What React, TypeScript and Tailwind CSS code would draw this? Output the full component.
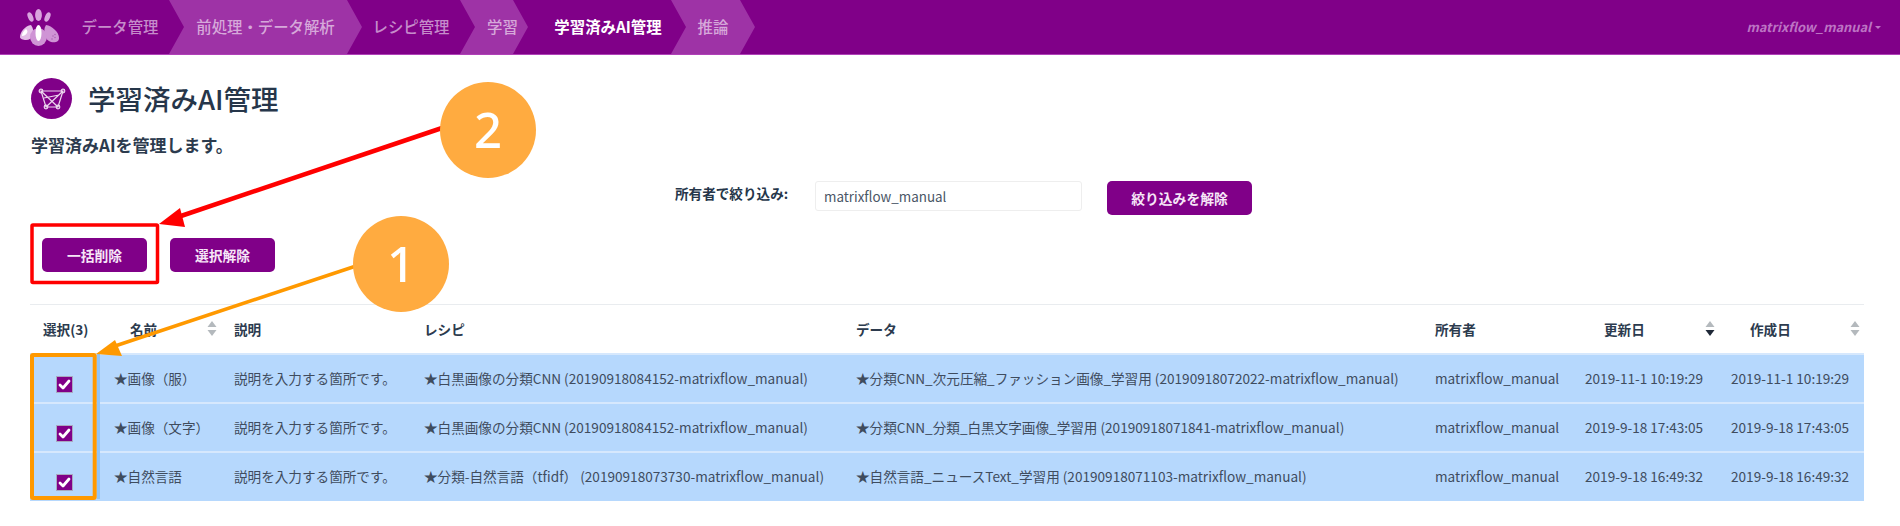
const font = { fontFamily: '"Noto Sans CJK JP", "Noto Sans", sans-serif' };

function Segment({ label, light, active, w, shift }: { label: string; light?: boolean; active?: boolean; w: number; shift?: boolean }) {
  return (
    <div
      className={`relative flex h-full shrink-0 items-center justify-center ${shift ? "pl-[17px]" : ""} ${light ? "bg-[#9e33a6] [clip-path:polygon(0_0,calc(100%-15px)_0,100%_50%,calc(100%-15px)_100%,0_100%,15px_50%)]" : ""}`}
      style={{ width: w }}
    >
      <span className={`text-[15.4px] leading-none whitespace-nowrap ${active ? "font-bold text-white" : light ? "font-medium text-[#d6a8da]" : "font-medium text-[#c68ccb]"}`}>
        {label}
      </span>
    </div>
  );
}

function Logo() {
  return (
    <svg width="40" height="37" viewBox="0 0 40 37" className="shrink-0">
      <ellipse cx="18.5" cy="6" rx="3.4" ry="6" fill="#d9a4de" />
      <ellipse cx="10.5" cy="8" rx="2.5" ry="5" fill="#d9a4de" transform="rotate(-24 10.5 8)" />
      <ellipse cx="27.5" cy="8" rx="2.5" ry="5" fill="#d9a4de" transform="rotate(24 27.5 8)" />
      <path d="M11 16C5 17 0 23 0 28c0 2 3 3 6 3 3 0 6-2 7-5 1-4 0-7-2-10Z" fill="#e3bce6" />
      <path d="M6 20C3 22 2 25 2 27c2 0 4-1 5-3 1-2 0-3-1-4Z" fill="#ffffff" />
      <path d="M26 16c6 1 13 7 13 13 0 4-4 5-8 4-3-1-5-3-6-7-1-4-1-7 1-10Z" fill="#cf94d5" />
      <circle cx="33" cy="27" r="0.7" fill="#a45cab" />
      <circle cx="35" cy="25.5" r="0.7" fill="#a45cab" />
      <circle cx="35" cy="28.5" r="0.7" fill="#a45cab" />
      <circle cx="32" cy="30" r="0.7" fill="#a45cab" />
      <ellipse cx="18.5" cy="28" rx="8.5" ry="9" fill="#cf94d5" />
      <ellipse cx="18.5" cy="24" rx="3" ry="8" fill="#ffffff" />
    </svg>
  );
}

function ModelIcon() {
  return (
    <div className="flex h-[41px] w-[41px] shrink-0 items-center justify-center rounded-full bg-[#800088]">
      <svg width="28" height="24" viewBox="0 0 28 24" fill="none" stroke="#ecd6ee" strokeWidth="1.2">
        <path d="M3 4 L25 4 L20 20 L8 20 Z" />
        <path d="M3 4 L20 20 M25 4 L8 20 M6 11 L21 8" />
        <circle cx="3" cy="4" r="1.8" />
        <circle cx="25" cy="4" r="1.8" />
        <circle cx="20" cy="20" r="1.8" />
        <circle cx="8" cy="20" r="1.8" />
      </svg>
    </div>
  );
}

function Sort({ down }: { down?: boolean }) {
  return (
    <svg width="10" height="15" viewBox="0 0 10 15" className="shrink-0">
      <path d="M5 0 L9.5 6 L0.5 6 Z" fill="#b4b9bd" />
      <path d="M5 15 L9.5 9 L0.5 9 Z" fill={down ? "#1f2937" : "#b4b9bd"} />
    </svg>
  );
}

function Button({ children, w }: { children: string; w: number }) {
  return (
    <button className="flex h-[34px] items-center justify-center rounded-[5px] bg-[#800088] text-[13.8px] font-bold text-[#f6e6f7]" style={{ width: w }}>
      {children}
    </button>
  );
}

const colWidths = [71, 120, 190, 432, 579, 150, 146, 146];
const rows = [
  ["★画像（服）", "説明を入力する箇所です。", "★白黒画像の分類CNN (20190918084152-matrixflow_manual)", "★分類CNN_次元圧縮_ファッション画像_学習用 (20190918072022-matrixflow_manual)", "matrixflow_manual", "2019-11-1 10:19:29", "2019-11-1 10:19:29"],
  ["★画像（文字）", "説明を入力する箇所です。", "★白黒画像の分類CNN (20190918084152-matrixflow_manual)", "★分類CNN_分類_白黒文字画像_学習用 (20190918071841-matrixflow_manual)", "matrixflow_manual", "2019-9-18 17:43:05", "2019-9-18 17:43:05"],
  ["★自然言語", "説明を入力する箇所です。", "★分類-自然言語（tfidf） (20190918073730-matrixflow_manual)", "★自然言語_ニュースText_学習用 (20190918071103-matrixflow_manual)", "matrixflow_manual", "2019-9-18 16:49:32", "2019-9-18 16:49:32"],
];

function Check() {
  return (
    <div className="mt-[12px] flex h-[17px] w-[17px] items-center justify-center border border-[#a9a9c0] bg-[#800088]">
      <svg width="13" height="11" viewBox="0 0 13 11" fill="none" stroke="#fff" strokeWidth="2.8" strokeLinecap="round" strokeLinejoin="round">
        <path d="M2 6 L5 9 L11 2" />
      </svg>
    </div>
  );
}

export default function App() {
  return (
    <div className="relative h-[526px] w-[1900px] overflow-hidden bg-white text-[13.6px] text-[#37465a]" style={font}>
      <header className="flex h-[55px] items-stretch border-b border-[#b040b8] bg-[#800088]">
        <div className="flex w-[71px] shrink-0 items-center pl-[20px]"><Logo /></div>
        <Segment label="データ管理" w={98} />
        <Segment label="前処理・データ解析" light w={193} />
        <Segment label="レシピ管理" w={98} />
        <Segment label="学習" light w={68} shift />
        <Segment label="学習済みAI管理" active w={143} shift />
        <Segment label="推論" light w={84} />
        <div className="ml-auto flex items-center gap-[4px] pr-[19px] text-[12.8px] font-bold italic text-[#bd74c4]">
          matrixflow_manual
          <span className="h-0 w-0 border-x-[3px] border-t-[3px] border-x-transparent border-t-[#bd74c4]" />
        </div>
      </header>

      <main className="px-[30px] pt-[23px]">
        <div className="flex items-center gap-[16px] pl-[1px]">
          <ModelIcon />
          <h1 className="text-[27.5px] leading-[41px] font-medium text-[#26364a]">学習済みAI管理</h1>
        </div>
        <p className="mt-[15px] pl-[1px] text-[17px] leading-[22px] font-bold text-[#2c3b4e]">学習済みAIを管理します。</p>

        <div className="mt-[25px] flex items-start pl-[645px]">
          <span className="mt-[3px] w-[140px] text-[13.6px] leading-[18px] font-bold text-[#26364a]">所有者で絞り込み:</span>
          <div className="flex h-[30px] w-[267px] items-center rounded-[3px] border border-[#eeeeee] pl-[8px] text-[13.4px] text-[#4a5666]">matrixflow_manual</div>
          <div className="ml-[25px]"><Button w={145}>絞り込みを解除</Button></div>
        </div>

        <div className="mt-[23px] flex gap-[23px] pl-[12px]">
          <Button w={105}>一括削除</Button>
          <Button w={105}>選択解除</Button>
        </div>

        <table className="mt-[32px] w-[1834px] table-fixed border-t border-[#e9ecef]">
          <colgroup>
            {colWidths.map((w, i) => <col key={i} style={{ width: w }} />)}
          </colgroup>
          <thead>
            <tr className="h-[49px] text-left text-[13.6px] text-[#2c3b4e]">
              <th className="pl-[13px] font-bold">選択(3)</th>
              <th className="pl-[29px] font-bold"><div className="flex items-center justify-between pr-[4px]">名前<Sort /></div></th>
              <th className="pl-[13px] font-bold">説明</th>
              <th className="pl-[13px] font-bold">レシピ</th>
              <th className="pl-[13px] font-bold">データ</th>
              <th className="pl-[13px] font-bold">所有者</th>
              <th className="pl-[32px] font-bold"><div className="flex items-center justify-between pr-[3px]">更新日<Sort down /></div></th>
              <th className="pl-[32px] font-bold"><div className="flex items-center justify-between pr-[4px]">作成日<Sort /></div></th>
            </tr>
          </thead>
          <tbody>
            {rows.map((r, i) => (
              <tr key={i} className="h-[49px] border-t-2 border-[#d6e8fd] bg-[#b6d8fd] text-[#3f4c5e]">
                <td><div className="flex justify-center pr-[2px]"><Check /></div></td>
                {r.map((c, j) => (
                  <td key={j} className="whitespace-nowrap pb-[1px] pl-[13px] leading-[18px]">
                    {c}
                  </td>
                ))}
              </tr>
            ))}
          </tbody>
        </table>
      </main>

      {/* annotations */}
      <svg className="absolute top-0 left-0" width="1900" height="526" fill="none">
        <rect x="97" y="354" width="3" height="145" fill="#8ec4fa" />
        <rect x="32" y="225" width="125.5" height="57.5" stroke="#ff0000" strokeWidth="3.5" rx="1" />
        <path d="M442 128 L178 217" stroke="#ff0000" strokeWidth="4.5" />
        <path d="M159 224 L180 208 L185 227 Z" fill="#ff0000" />
        <rect x="32" y="355" width="62.7" height="143" stroke="#ff9900" strokeWidth="4" rx="1" />
        <path d="M356 266 L112 347" stroke="#ff9900" strokeWidth="3.5" />
        <path d="M96 354 L115 340 L122 356 Z" fill="#ff9900" />
      </svg>
      <div className="absolute top-[82px] left-[440px] flex h-[96px] w-[96px] items-center justify-center rounded-full bg-[#ffab40] text-[49px] font-medium text-white" style={{ fontFamily: '"Noto Sans", sans-serif' }}>2</div>
      <div className="absolute top-[216px] left-[353px] flex h-[96px] w-[96px] items-center justify-center rounded-full bg-[#ffab40] text-[49px] font-medium text-white" style={{ fontFamily: '"Noto Sans", sans-serif' }}>1</div>
    </div>
  );
}
